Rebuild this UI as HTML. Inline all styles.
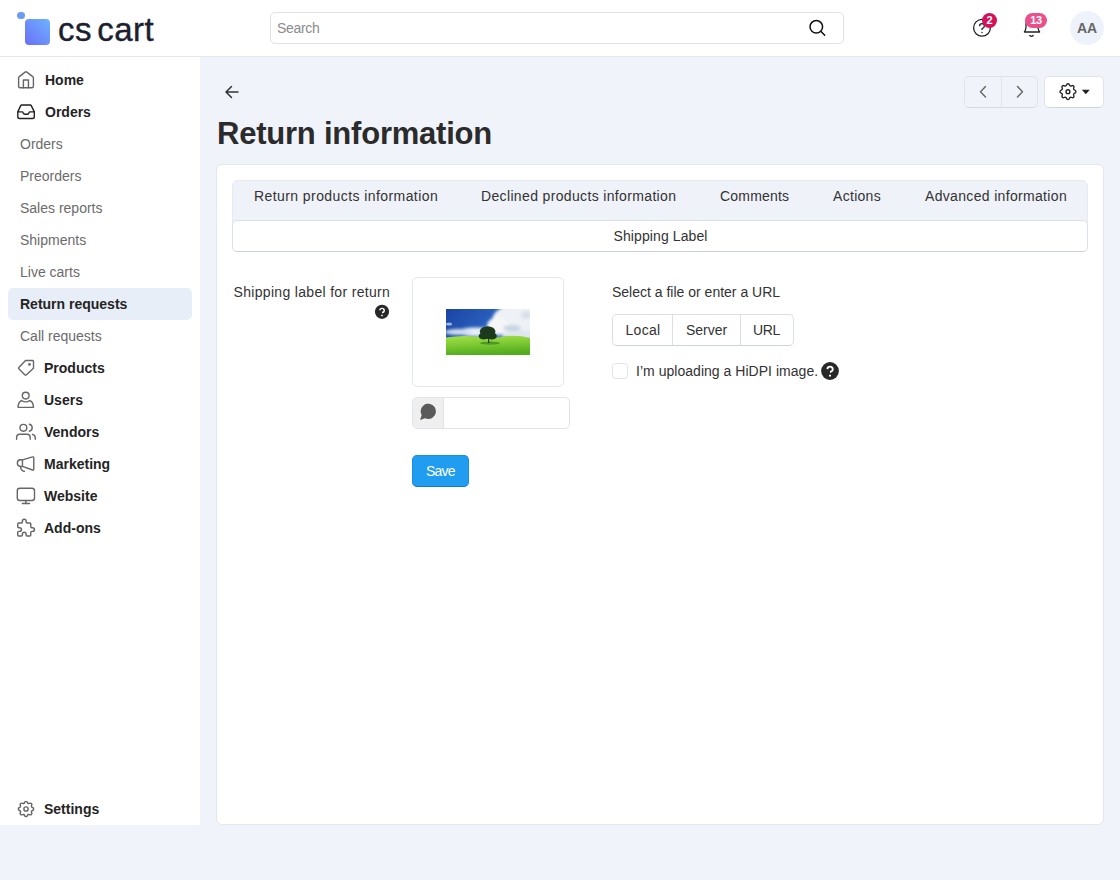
<!DOCTYPE html>
<html><head><meta charset="utf-8">
<style>
*{box-sizing:border-box;margin:0;padding:0}
html,body{width:1120px;height:880px;overflow:hidden}
body{background:#f0f3fa;font-family:"Liberation Sans",sans-serif;color:#2b2b2b;position:relative;font-size:14px}
.abs{position:absolute}
.t{position:absolute;white-space:nowrap;line-height:14px;font-size:14px}
.nav{color:#242424;font-weight:bold}
.sub{color:#6b6b6b}
svg{position:absolute;overflow:visible}
</style></head><body>
<!-- backgrounds -->
<div class="abs" style="left:0;top:0;width:1120px;height:57px;background:#fff;border-bottom:1px solid #e3e7ee"></div>
<div class="abs" style="left:0;top:57px;width:200px;height:768px;background:#fff"></div>
<div class="abs" style="left:216px;top:164px;width:888px;height:661px;background:#fff;border:1px solid #e3e7ee;border-radius:6px"></div>

<!-- logo -->
<div class="abs" style="left:17px;top:11.5px;width:7.5px;height:7.5px;border-radius:50%;background:#6b9cf5"></div>
<div class="abs" style="left:24.5px;top:19px;width:25px;height:25.5px;border-radius:4px;background:linear-gradient(45deg,#6b6ff6,#6db3ff)"></div>
<div class="t" style="left:58px;top:13px;font-size:33px;line-height:33px;color:#1b1f30;letter-spacing:0.4px;word-spacing:-4px;-webkit-text-stroke:0.4px #1b1f30">cs cart</div>

<!-- search -->
<div class="abs" style="left:270px;top:12px;width:574px;height:32px;border:1px solid #dde2e9;border-radius:5px;background:#fff"></div>
<div class="t" style="left:277px;top:21px;color:#8c8c8c;letter-spacing:-0.3px">Search</div>

<svg style="left:0;top:0" width="1120" height="880">
  <!-- search icon -->
  <circle cx="816.3" cy="26.8" r="6.3" fill="none" stroke="#111" stroke-width="1.5"/>
  <line x1="820.8" y1="31.3" x2="824.7" y2="35.2" stroke="#111" stroke-width="1.5" stroke-linecap="round"/>
  <!-- help -->
  <circle cx="982" cy="27.8" r="8.4" fill="none" stroke="#222" stroke-width="1.3"/>
  <path d="M979.6 26.2 Q979.6 23.6 982 23.6 Q984.4 23.6 984.4 26 Q984.4 27.6 982 28.9 L982 30" fill="none" stroke="#222" stroke-width="1.3"/>
  <circle cx="982" cy="32.4" r="0.75" fill="#222"/>
  <!-- bell -->
  <path d="M1024.4 32 L1039.6 32 Q1038.3 30.2 1038 27.5 L1038 24 Q1038 18 1032 18 Q1026 18 1026 24 L1026 27.5 Q1025.7 30.2 1024.4 32 Z" fill="none" stroke="#222" stroke-width="1.3" stroke-linejoin="round"/>
  <path d="M1029.8 35.5 Q1031.5 37.3 1033.2 35.5" fill="none" stroke="#222" stroke-width="1.3" stroke-linecap="round"/>

  <!-- sidebar icons -->
  <g fill="none" stroke="#666" stroke-width="1.4" stroke-linejoin="round" stroke-linecap="round">
    <!-- home -->
    <path d="M18.6 86.3 L18.6 77.9 Q18.6 77.1 19.3 76.6 L25.1 72.1 Q26 71.5 26.9 72.1 L32.7 76.6 Q33.4 77.1 33.4 77.9 L33.4 86.3 Q33.4 87.8 31.9 87.8 L20.1 87.8 Q18.6 87.8 18.6 86.3 Z"/>
    <path d="M23.4 87.8 L23.4 80 L28.45 80 L28.45 87.8"/>
    <!-- products tag -->
    <path d="M18.8 367.6 Q18.3 368.2 18.8 368.8 L25 374.9 Q25.6 375.4 26.2 374.9 L33.5 368.2 L33.5 361.3 Q33.5 360.5 32.7 360.5 L25.5 360.5 Z"/>
    <!-- users -->
    <circle cx="25.7" cy="395.6" r="3.4"/>
    <path d="M18.7 407.4 Q17.9 407.4 18 406.6 Q18.7 401.6 21.6 400.5 Q23.5 401.9 25.7 401.9 Q27.9 401.9 29.8 400.5 Q32.8 401.6 33.5 406.6 Q33.6 407.4 32.8 407.4 Z"/>
    <!-- vendors -->
    <circle cx="23.4" cy="427.8" r="3.4"/>
    <path d="M29.4 424.3 Q32.2 425 32.2 427.8 Q32.2 430.6 29.4 431.3"/>
    <path d="M16.6 439.2 L16.6 437.5 Q16.6 434.3 19.8 434.3 L27 434.3 Q30.2 434.3 30.2 437.5 L30.2 439.2"/>
    <path d="M32.5 434.4 Q35.3 435.2 35.3 438 L35.3 439.2"/>
    <!-- marketing -->
    <path d="M22.45 459.8 L32.6 456.9 Q33.8 456.6 33.8 457.8 L33.8 469.1 Q33.8 470.3 32.6 470 L22.45 466.45 Z"/>
    <path d="M22.45 459.8 L20.5 459.8 A3.33 3.33 0 0 0 20.5 466.45 L22.45 466.45"/>
    <path d="M20.5 466.7 Q20.8 470.6 24.4 471.4"/>
    <!-- website -->
    <rect x="17.3" y="488.3" width="17.2" height="12.2" rx="2.5"/>
    <path d="M25.8 500.5 L25.8 503.5 M22.3 503.5 L29.6 503.5"/>
    <!-- addons puzzle -->
    <path transform="translate(14.96 516.5) scale(0.93)" stroke-width="1.55" d="M4 7h3a1 1 0 0 0 1 -1v-1a2 2 0 0 1 4 0v1a1 1 0 0 0 1 1h3a1 1 0 0 1 1 1v3a1 1 0 0 0 1 1h1a2 2 0 0 1 0 4h-1a1 1 0 0 0 -1 1v3a1 1 0 0 1 -1 1h-3a1 1 0 0 1 -1 -1v-1a2 2 0 0 0 -4 0v1a1 1 0 0 1 -1 1h-3a1 1 0 0 1 -1 -1v-3a1 1 0 0 1 1 -1h1a2 2 0 0 0 0 -4h-1a1 1 0 0 1 -1 -1v-3a1 1 0 0 1 1 -1"/>
  </g>
  <g fill="none" stroke="#222" stroke-width="1.4" stroke-linejoin="round" stroke-linecap="round">
    <!-- orders inbox -->
    <path d="M17.8 111.9 L20.6 105.9 Q21 105.05 21.9 105.05 L30.1 105.05 Q31 105.05 31.4 105.9 L34.3 111.9 L34.3 116.7 Q34.3 118.5 32.5 118.5 L19.6 118.5 Q17.8 118.5 17.8 116.7 Z"/>
    <path d="M17.8 111.9 L22.2 111.9 Q22.8 111.9 23.1 112.6 L23.5 113.4 Q23.9 114.2 24.8 114.2 L27.3 114.2 Q28.2 114.2 28.6 113.4 L29 112.6 Q29.3 111.9 29.9 111.9 L34.3 111.9"/>
  </g>
  <circle cx="29.5" cy="364.4" r="1.35" fill="#666"/>
</svg>

<!-- sidebar text -->
<div class="t nav" style="left:45px;top:73px">Home</div>
<div class="t nav" style="left:45px;top:105px">Orders</div>
<div class="t sub" style="left:20px;top:137px">Orders</div>
<div class="t sub" style="left:20px;top:169px">Preorders</div>
<div class="t sub" style="left:20px;top:201px">Sales reports</div>
<div class="t sub" style="left:20px;top:233px">Shipments</div>
<div class="t sub" style="left:20px;top:265px">Live carts</div>
<div class="abs" style="left:8px;top:288px;width:184px;height:32px;border-radius:5px;background:#e8eef7"></div>
<div class="t nav" style="left:20px;top:297px">Return requests</div>
<div class="t sub" style="left:20px;top:329px">Call requests</div>
<div class="t nav" style="left:44px;top:361px">Products</div>
<div class="t nav" style="left:44px;top:393px">Users</div>
<div class="t nav" style="left:44px;top:425px">Vendors</div>
<div class="t nav" style="left:44px;top:457px">Marketing</div>
<div class="t nav" style="left:44px;top:489px">Website</div>
<div class="t nav" style="left:44px;top:521px">Add-ons</div>
<div class="t nav" style="left:44px;top:802px">Settings</div>

<!-- header badges -->
<div class="abs" style="left:982px;top:13px;width:15px;height:15px;border-radius:50%;background:#d3125a;color:#fff;font-weight:bold;font-size:11px;line-height:15px;text-align:center">2</div>
<div class="abs" style="left:1025px;top:13px;width:22px;height:15px;border-radius:8px;background:#ea4f8b;color:#fff;font-weight:bold;font-size:11px;line-height:15px;text-align:center;letter-spacing:-0.3px">13</div>
<div class="abs" style="left:1070px;top:11px;width:34px;height:34px;border-radius:50%;background:#eef2fa;color:#666;font-weight:bold;font-size:14px;line-height:34px;text-align:center">AA</div>

<svg style="left:0;top:0" width="1120" height="880">
  <!-- settings gear -->
  <g fill="none" stroke="#666" stroke-width="1.3" stroke-linejoin="round">
    <g transform="translate(15.8 798.8) scale(0.85)" stroke-width="1.7"><path d="M10.325 4.317c.426 -1.756 2.924 -1.756 3.35 0a1.724 1.724 0 0 0 2.573 1.066c1.543 -.94 3.31 .826 2.37 2.37a1.724 1.724 0 0 0 1.065 2.572c1.756 .426 1.756 2.924 0 3.35a1.724 1.724 0 0 0 -1.066 2.573c.94 1.543 -.826 3.31 -2.37 2.37a1.724 1.724 0 0 0 -2.572 1.065c-.426 1.756 -2.924 1.756 -3.35 0a1.724 1.724 0 0 0 -2.573 -1.066c-1.543 .94 -3.31 -.826 -2.37 -2.37a1.724 1.724 0 0 0 -1.065 -2.572c-1.756 -.426 -1.756 -2.924 0 -3.35a1.724 1.724 0 0 0 1.066 -2.573c-.94 -1.543 .826 -3.31 2.37 -2.37c1 .608 2.296 .07 2.572 -1.065z"/><circle cx="12" cy="12" r="2.5"/></g>
  </g>
  <!-- back arrow -->
  <path d="M226.5 92 L238 92 M231.5 86.5 L226 92 L231.5 97.5" fill="none" stroke="#333" stroke-width="1.5" stroke-linecap="round" stroke-linejoin="round"/>
</svg>

<!-- title -->
<div class="t" style="left:217px;top:117.5px;font-size:31px;line-height:31px;font-weight:bold;color:#2b2b2b;letter-spacing:-0.22px">Return information</div>

<!-- prev/next + gear buttons -->
<div class="abs" style="left:964px;top:76px;width:74px;height:32px;border:1px solid #dfe4eb;border-bottom-color:#d3dae3;border-radius:5px;background:#f0f3fa"></div>
<div class="abs" style="left:1001px;top:77px;width:1px;height:30px;background:#dfe4eb"></div>
<div class="abs" style="left:1044px;top:76px;width:60px;height:32px;border:1px solid #dfe4eb;border-bottom-color:#cfd6e0;border-radius:5px;background:#fff"></div>
<svg style="left:0;top:0" width="1120" height="880">
  <path d="M985.5 86.5 L980.5 91.8 L985.5 97" fill="none" stroke="#666" stroke-width="1.4" stroke-linecap="round" stroke-linejoin="round"/>
  <path d="M1017.5 86.5 L1022.5 91.8 L1017.5 97" fill="none" stroke="#666" stroke-width="1.4" stroke-linecap="round" stroke-linejoin="round"/>
  <g fill="none" stroke="#222" stroke-width="1.3" stroke-linejoin="round">
    <g transform="translate(1057.4 81.1) scale(0.88)" stroke-width="1.55"><path d="M10.325 4.317c.426 -1.756 2.924 -1.756 3.35 0a1.724 1.724 0 0 0 2.573 1.066c1.543 -.94 3.31 .826 2.37 2.37a1.724 1.724 0 0 0 1.065 2.572c1.756 .426 1.756 2.924 0 3.35a1.724 1.724 0 0 0 -1.066 2.573c.94 1.543 -.826 3.31 -2.37 2.37a1.724 1.724 0 0 0 -2.572 1.065c-.426 1.756 -2.924 1.756 -3.35 0a1.724 1.724 0 0 0 -2.573 -1.066c-1.543 .94 -3.31 -.826 -2.37 -2.37a1.724 1.724 0 0 0 -1.065 -2.572c-1.756 -.426 -1.756 -2.924 0 -3.35a1.724 1.724 0 0 0 1.066 -2.573c-.94 -1.543 .826 -3.31 2.37 -2.37c1 .608 2.296 .07 2.572 -1.065z"/><circle cx="12" cy="12" r="2.2"/></g>
  </g>
  <path d="M1081.8 89.8 L1089.8 89.8 L1085.8 94.2 Z" fill="#222"/>
</svg>

<!-- tabs -->
<div class="abs" style="left:232px;top:180px;width:856px;height:72px;border:1px solid #e7ebf1;border-radius:6px;background:#eff2f9"></div>
<div class="abs" style="left:232px;top:220px;width:856px;height:32px;border:1px solid #dbe1e9;border-bottom-color:#c9d1dc;border-radius:5px;background:#fff"></div>
<div class="t" style="left:254px;top:189px;color:#333;letter-spacing:0.42px">Return products information</div>
<div class="t" style="left:481px;top:189px;color:#333;letter-spacing:0.35px">Declined products information</div>
<div class="t" style="left:720px;top:189px;color:#333;letter-spacing:0.2px">Comments</div>
<div class="t" style="left:833px;top:189px;color:#333;letter-spacing:0.3px">Actions</div>
<div class="t" style="left:925px;top:189px;color:#333;letter-spacing:0.33px">Advanced information</div>
<div class="t" style="left:613.5px;top:229px;color:#333;letter-spacing:0.1px">Shipping Label</div>

<!-- form -->
<div class="t" style="left:233.5px;top:285px;color:#333;letter-spacing:0.32px">Shipping label for return</div>
<svg style="left:0;top:0" width="1" height="1">
  <circle cx="382" cy="311.8" r="7.1" fill="#282828"/>
  <path d="M379.89 310.30 Q380.06 308.37 382.00 308.37 Q384.20 308.37 384.20 310.48 Q384.20 312.24 382.00 312.59" fill="none" stroke="#fff" stroke-width="1.45" stroke-linecap="butt"/>
  <rect x="381.20" y="314.80" width="1.60" height="1.40" fill="#fff"/>
</svg>

<div class="abs" style="left:412px;top:277px;width:152px;height:110px;border:1px solid #e3e7ee;border-radius:5px;background:#fff"></div>
<svg style="left:446px;top:309px;overflow:hidden" width="84" height="46" viewBox="0 0 84 46">
  <defs>
    <linearGradient id="sky" x1="0" y1="0" x2="1" y2="0.5">
      <stop offset="0" stop-color="#1a44a2"/><stop offset="0.5" stop-color="#2a5fbd"/><stop offset="1" stop-color="#6f9ad2"/>
    </linearGradient>
    <linearGradient id="grass" x1="0" y1="0" x2="0.2" y2="1">
      <stop offset="0" stop-color="#a4e24c"/><stop offset="0.45" stop-color="#82cc36"/><stop offset="1" stop-color="#52ad1e"/>
    </linearGradient>
    <filter id="blur1" x="-50%" y="-50%" width="200%" height="200%"><feGaussianBlur stdDeviation="1.8"/></filter>
    <filter id="blur2" x="-50%" y="-50%" width="200%" height="200%"><feGaussianBlur stdDeviation="0.6"/></filter>
  </defs>
  <rect width="84" height="46" fill="url(#sky)"/>
  <g filter="url(#blur1)">
    <ellipse cx="72" cy="12" rx="26" ry="17" fill="#eef2f6"/>
    <ellipse cx="52" cy="17" rx="11" ry="9" fill="#f4f6f8"/>
    <ellipse cx="30" cy="23" rx="18" ry="4.5" fill="#e6edf6"/>
    <ellipse cx="74" cy="26" rx="18" ry="5" fill="#dfe6ee"/>
    <ellipse cx="12" cy="23" rx="13" ry="3" fill="#d0dcee"/>
    <ellipse cx="66" cy="19" rx="9" ry="3" fill="#c9d4e2"/>
    <ellipse cx="80" cy="6" rx="5" ry="4" fill="#d8e0ea"/>
  </g>
  <ellipse cx="3" cy="15" rx="3" ry="1.5" fill="#bcd0ea" filter="url(#blur2)" opacity="0.8"/>
  <path d="M0 28.5 Q14 26 30 27.5 Q50 30 60 27 Q74 26 84 29 L84 46 L0 46 Z" fill="url(#grass)"/>
  <ellipse cx="44" cy="34.2" rx="10" ry="1.6" fill="#3c8a1c" opacity="0.75" filter="url(#blur2)"/>
  <rect x="42" y="28" width="1.2" height="6" fill="#2b3a1a"/>
  <g fill="#1b3a1c" filter="url(#blur2)">
    <ellipse cx="41.6" cy="22.5" rx="7.8" ry="5.2"/>
    <ellipse cx="37.5" cy="27" rx="4.8" ry="3.6"/>
    <ellipse cx="46" cy="27" rx="4.8" ry="3.6"/>
    <ellipse cx="42" cy="26" rx="5" ry="4"/>
  </g>
</svg>

<div class="abs" style="left:412px;top:397px;width:158px;height:32px;border:1px solid #dfe3ea;border-radius:5px;background:#fff;overflow:hidden">
  <div class="abs" style="left:0;top:0;width:31px;height:30px;background:#efeff0;border-right:1px solid #dfe3ea"></div>
</div>
<svg style="left:0;top:0" width="1120" height="880">
  <path d="M421.7 415.1 A7.6 7.6 0 1 1 425.1 418.2 L420 419.9 Z" fill="#5a5a5a"/>
</svg>

<div class="abs" style="left:412px;top:455px;width:57px;height:32px;border-radius:5px;background:#209cf1;border:1px solid #1a8ee6;border-bottom-color:#1679c9"></div>
<div class="t" style="left:426px;top:464px;color:#fff;letter-spacing:-0.8px">Save</div>

<div class="t" style="left:612px;top:285px;color:#333">Select a file or enter a URL</div>
<div class="abs" style="left:612px;top:314px;width:182px;height:32px;border:1px solid #dbe0e8;border-bottom-color:#ccd4df;border-radius:5px;background:#fff"></div>
<div class="abs" style="left:672px;top:315px;width:1px;height:30px;background:#dbe0e8"></div>
<div class="abs" style="left:740px;top:315px;width:1px;height:30px;background:#dbe0e8"></div>
<div class="t" style="left:625.5px;top:323px;color:#333;letter-spacing:0.3px">Local</div>
<div class="t" style="left:686px;top:323px;color:#333">Server</div>
<div class="t" style="left:753px;top:323px;color:#333;letter-spacing:-0.3px">URL</div>

<div class="abs" style="left:612px;top:363px;width:16px;height:16px;border:1.6px solid #dce3ed;border-radius:3.5px;background:#fff"></div>
<div class="t" style="left:636px;top:364px;color:#333;letter-spacing:0.03px">I’m uploading a HiDPI image.</div>
<svg style="left:0;top:0" width="1" height="1">
  <circle cx="830" cy="371" r="8.9" fill="#282828"/>
  <path d="M827.35 369.12 Q827.57 366.70 830.00 366.70 Q832.76 366.70 832.76 369.35 Q832.76 371.55 830.00 371.99" fill="none" stroke="#fff" stroke-width="1.82" stroke-linecap="butt"/>
  <rect x="829.00" y="374.76" width="2.01" height="1.75" fill="#fff"/>
</svg>
</body></html>
